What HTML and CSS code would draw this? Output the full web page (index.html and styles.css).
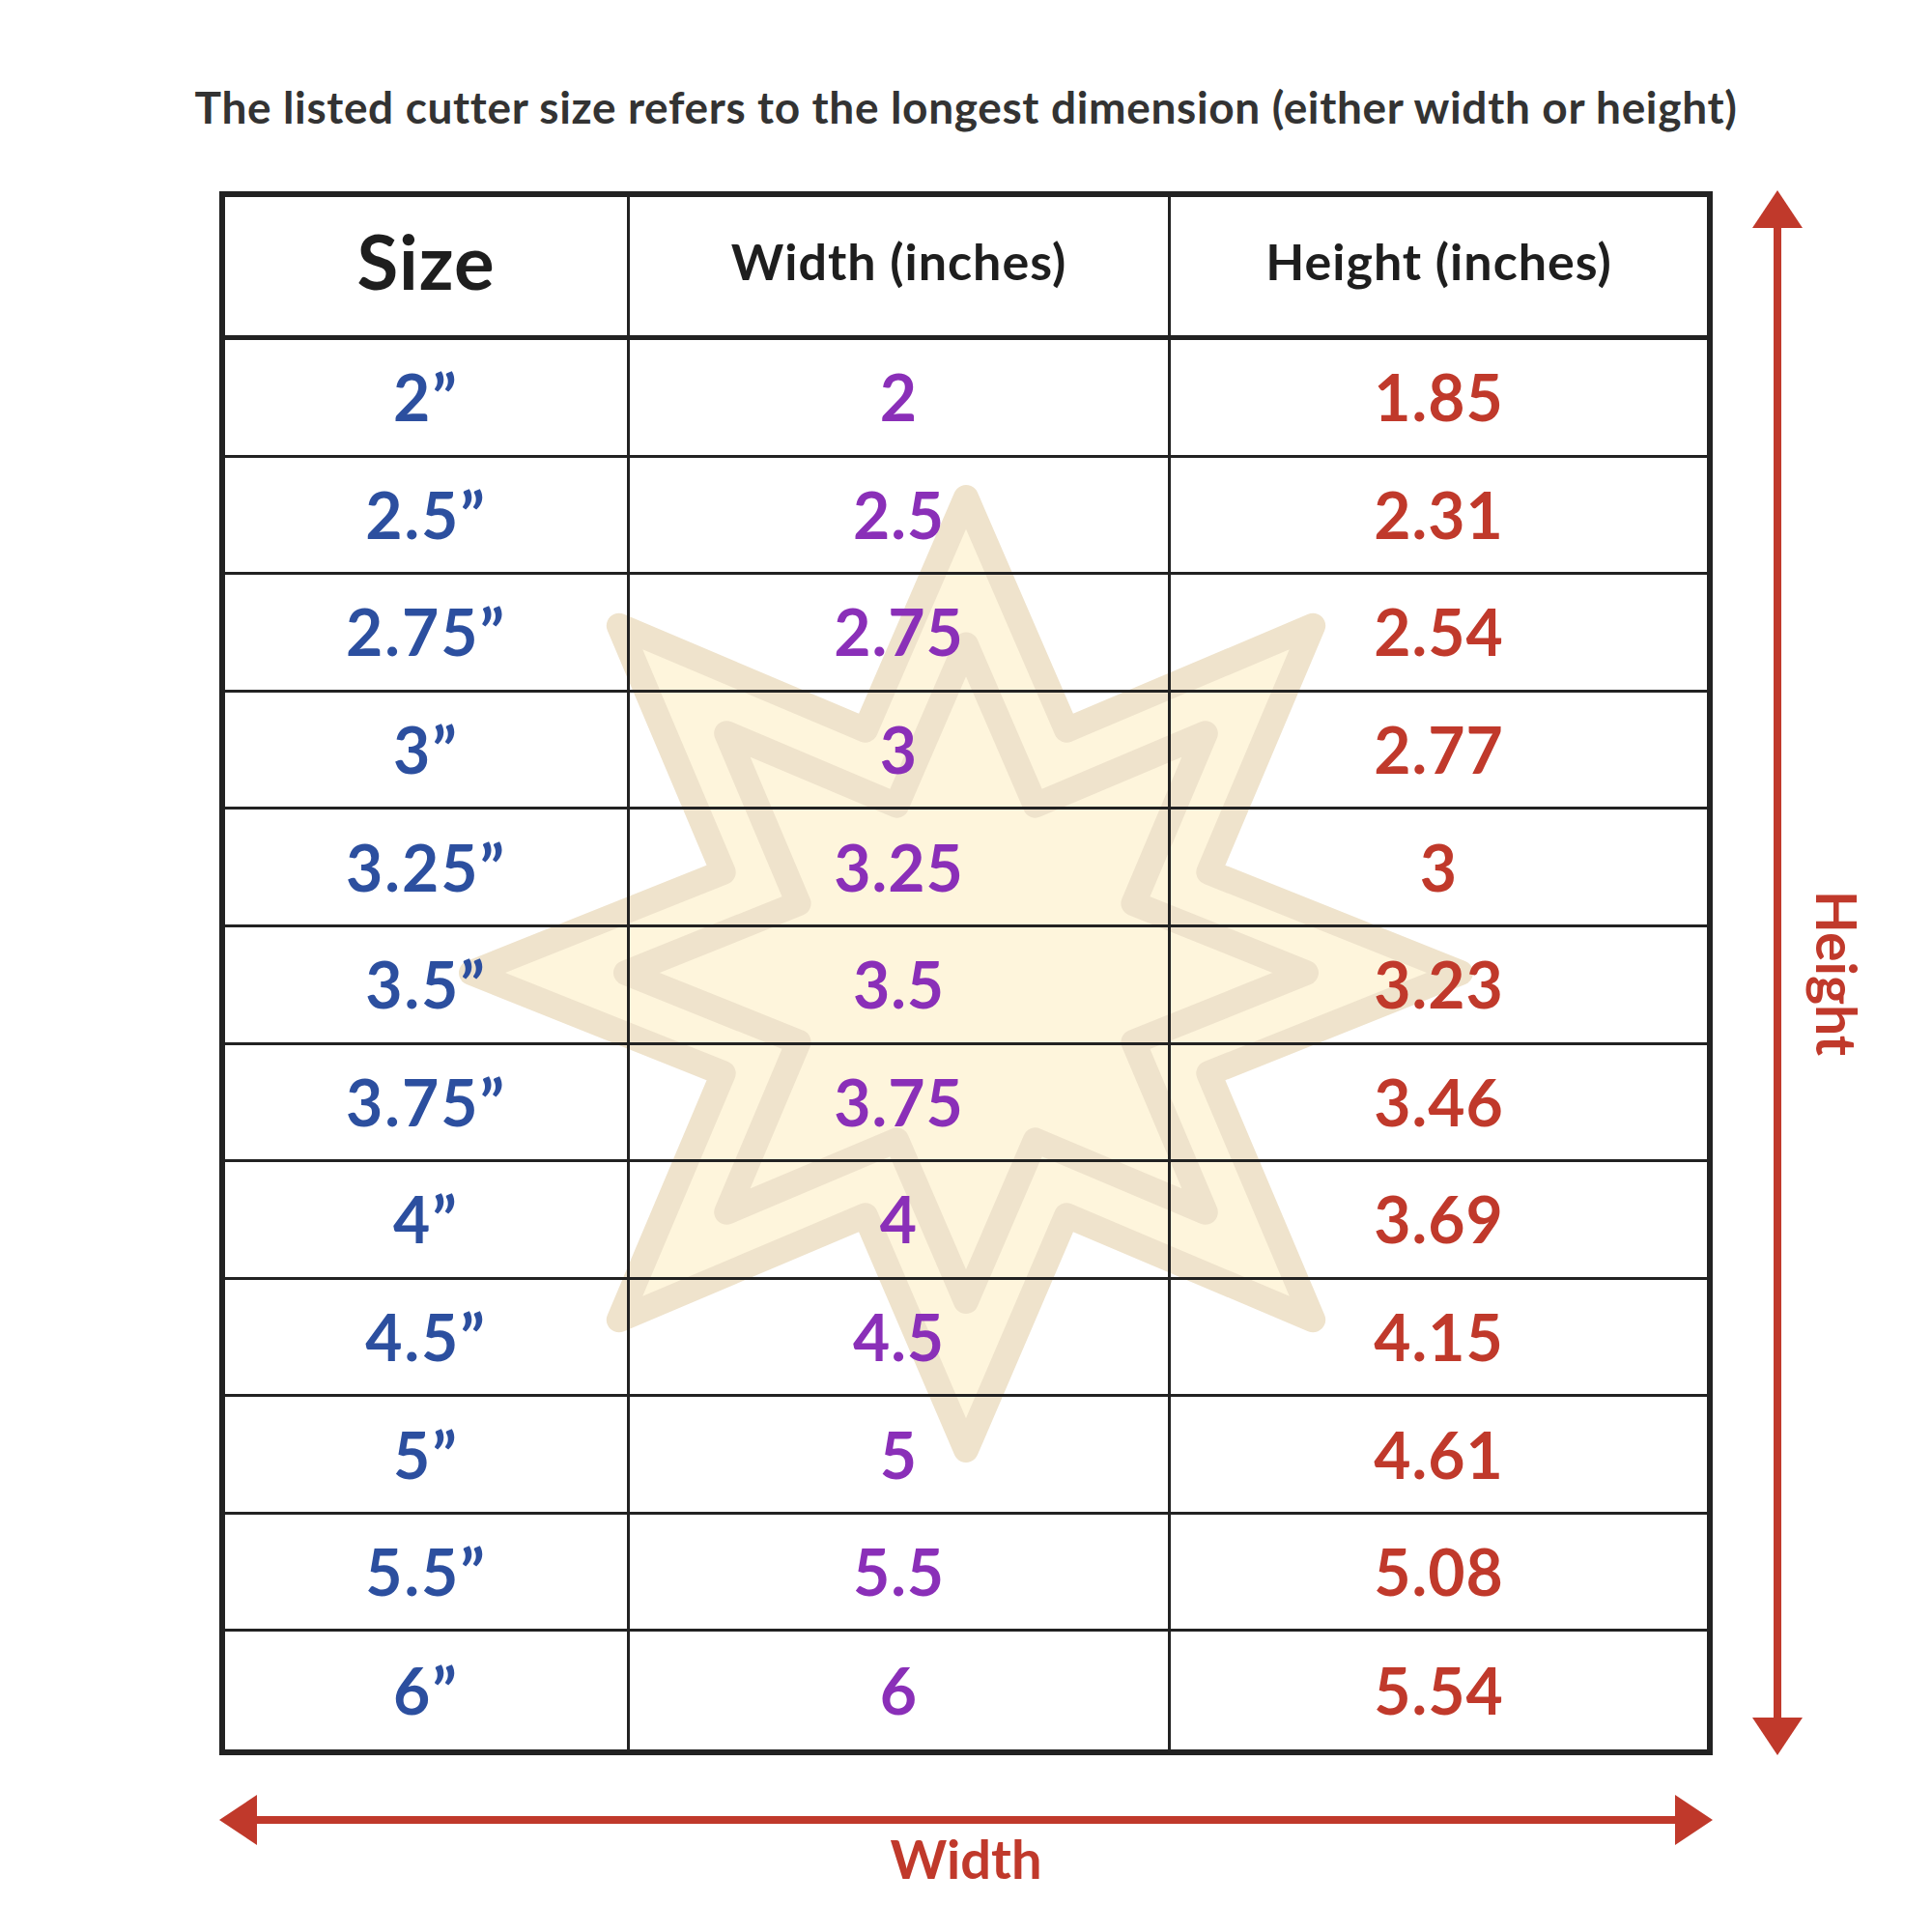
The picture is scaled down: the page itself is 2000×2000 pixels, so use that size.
FILE: index.html
```html
<!DOCTYPE html>
<html lang="en">
<head>
<meta charset="utf-8">
<title>Cutter size chart</title>
<link rel="stylesheet" href="styles.css">
</head>
<body>
<div class="page">
  <svg class="star" viewBox="0 0 1100 1100" width="1100" height="1100" aria-hidden="true">
    <path class="star-shape" d="M550 58 L654.1 298.7 L909.2 190.8 L801.3 445.9 L1062 550 L801.3 654.1 L909.2 909.2 L654.1 801.3 L550 1044 L445.9 801.3 L190.8 909.2 L298.7 654.1 L38 550 L298.7 445.9 L190.8 190.8 L445.9 298.7 Z"/>
    <path class="star-shape" d="M550 210.5 L621.8 376.6 L797.8 302.2 L723.4 478.2 L902 550 L723.4 621.8 L797.8 797.8 L621.8 723.4 L550 890 L478.2 723.4 L302.2 797.8 L376.6 621.8 L198 550 L376.6 478.2 L302.2 302.2 L478.2 376.6 Z"/>
  </svg>

  <p class="caption">The listed cutter size refers to the longest dimension (either width or height)</p>

  <div class="diagram">
    <div class="size-table">
      <div class="cell head head-size">Size</div>
      <div class="cell head">Width (inches)</div>
      <div class="cell head last-col">Height (inches)</div>

      <div class="cell c-size">2”</div><div class="cell c-width">2</div><div class="cell c-height last-col">1.85</div>
      <div class="cell c-size">2.5”</div><div class="cell c-width">2.5</div><div class="cell c-height last-col">2.31</div>
      <div class="cell c-size">2.75”</div><div class="cell c-width">2.75</div><div class="cell c-height last-col">2.54</div>
      <div class="cell c-size">3”</div><div class="cell c-width">3</div><div class="cell c-height last-col">2.77</div>
      <div class="cell c-size">3.25”</div><div class="cell c-width">3.25</div><div class="cell c-height last-col">3</div>
      <div class="cell c-size">3.5”</div><div class="cell c-width">3.5</div><div class="cell c-height last-col">3.23</div>
      <div class="cell c-size">3.75”</div><div class="cell c-width">3.75</div><div class="cell c-height last-col">3.46</div>
      <div class="cell c-size">4”</div><div class="cell c-width">4</div><div class="cell c-height last-col">3.69</div>
      <div class="cell c-size">4.5”</div><div class="cell c-width">4.5</div><div class="cell c-height last-col">4.15</div>
      <div class="cell c-size">5”</div><div class="cell c-width">5</div><div class="cell c-height last-col">4.61</div>
      <div class="cell c-size">5.5”</div><div class="cell c-width">5.5</div><div class="cell c-height last-col">5.08</div>
      <div class="cell c-size last-row">6”</div><div class="cell c-width last-row">6</div><div class="cell c-height last-col last-row">5.54</div>
    </div>

    <svg class="v-arrow" viewBox="0 0 52 1620" width="52" height="1620" aria-hidden="true">
      <line x1="26" y1="36" x2="26" y2="1584" class="arrow-line"/>
      <polygon points="26,0 0,39 52,39" class="arrow-head"/>
      <polygon points="26,1620 0,1581 52,1581" class="arrow-head"/>
    </svg>
    <div class="v-label">Height</div>

    <svg class="h-arrow" viewBox="0 0 1546 52" width="1546" height="52" aria-hidden="true">
      <line x1="36" y1="26" x2="1510" y2="26" class="arrow-line"/>
      <polygon points="0,26 39,0 39,52" class="arrow-head"/>
      <polygon points="1546,26 1507,0 1507,52" class="arrow-head"/>
    </svg>
    <div class="w-label">Width</div>
  </div>
</div>
</body>
</html>
```

FILE: styles.css
```css
html, body {
  margin: 0;
  padding: 0;
  background: #ffffff;
}

body {
  font-family: Lato, "Open Sans", "Liberation Sans", sans-serif;
}

.page {
  position: relative;
  width: 2000px;
  height: 2000px;
  padding-top: 83px;
  box-sizing: border-box;
}

.star {
  position: absolute;
  left: 450px;
  top: 457px;
  z-index: 0;
}

.star-shape {
  fill: #fef5dc;
  stroke: #efe3cc;
  stroke-width: 26;
  stroke-linejoin: round;
}

.caption {
  position: relative;
  z-index: 1;
  margin: 0 0 59px 0;
  text-align: center;
  font-size: 46px;
  line-height: 56px;
  font-weight: 700;
  letter-spacing: 0.65px;
  color: #333333;
}

.diagram {
  position: relative;
  z-index: 1;
  margin-left: 227px;
  display: grid;
  grid-template-columns: 1546px 93px 66px;
  grid-template-rows: 1619px auto auto;
  justify-content: start;
  align-items: start;
}

.size-table {
  grid-column: 1;
  grid-row: 1;
  box-sizing: border-box;
  width: 1546px;
  height: 1619px;
  border: 6px solid #222222;
  display: grid;
  grid-template-columns: 419px 560px 1fr;
  grid-template-rows: 148px repeat(12, 1fr);
}

.cell {
  display: flex;
  align-items: center;
  justify-content: center;
  border-right: 3px solid #222222;
  border-bottom: 3px solid #222222;
  font-weight: 700;
  font-size: 66px;
  line-height: 1;
  letter-spacing: 1px;
}

.last-col {
  border-right: none;
}

.last-row {
  border-bottom: none;
}

.head {
  border-bottom-width: 5px;
  padding-bottom: 12px;
  color: #1e1e1e;
  font-size: 52px;
  letter-spacing: 1px;
}

.head-size {
  font-size: 78px;
  letter-spacing: 1px;
}

.c-size {
  color: #2c4f9f;
  letter-spacing: 2px;
}

.c-width {
  color: #8a2fb8;
}

.c-height {
  color: #c0392b;
}

.v-arrow {
  grid-column: 2;
  grid-row: 1;
  margin-left: 41px;
  margin-top: -1px;
}

.v-label {
  grid-column: 3;
  grid-row: 1;
  align-self: center;
  justify-self: start;
  margin-left: 6px;
  width: 60px;
  writing-mode: vertical-rl;
  font-size: 57px;
  line-height: 60px;
  font-weight: 700;
  color: #c0392b;
}

.h-arrow {
  grid-column: 1;
  grid-row: 2;
  margin-top: 41px;
}

.w-label {
  grid-column: 1;
  grid-row: 3;
  justify-self: center;
  margin-top: -4px;
  font-size: 56px;
  line-height: 36px;
  font-weight: 700;
  color: #c0392b;
}

.arrow-line {
  stroke: #c0392b;
  stroke-width: 8;
}

.arrow-head {
  fill: #c0392b;
}
```
